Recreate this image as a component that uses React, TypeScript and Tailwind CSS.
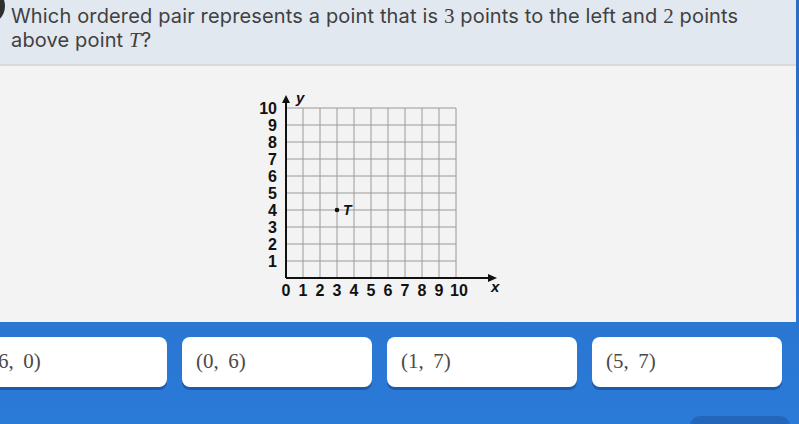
import React from 'react';

const CELL = 17;
const OX = 36;
const OY = 191;

const Graph: React.FC = () => {
  const lines = Array.from({ length: 11 }, (_, i) => i);
  return (
    <svg width="260" height="215" viewBox="0 0 260 215" xmlns="http://www.w3.org/2000/svg">
      {/* grid */}
      {lines.slice(1).map((i) => (
        <line key={'v' + i} x1={OX + i * CELL} y1={OY - 170} x2={OX + i * CELL} y2={OY} stroke="#9a9a9a" strokeWidth="1" />
      ))}
      {lines.slice(1).map((i) => (
        <line key={'h' + i} x1={OX} y1={OY - i * CELL} x2={OX + 170} y2={OY - i * CELL} stroke="#9a9a9a" strokeWidth="1" />
      ))}
      {/* axes */}
      <line x1={OX} y1={OY} x2={OX} y2={14} stroke="#111" strokeWidth="2" />
      <line x1={OX} y1={OY} x2={240} y2={OY} stroke="#111" strokeWidth="2" />
      <polygon points={`${OX - 4},16 ${OX + 4},16 ${OX},8`} fill="#111" />
      <polygon points={`238,${OY - 4} 238,${OY + 4} 247,${OY}`} fill="#111" />
      {/* y labels */}
      {lines.slice(1).map((i) => (
        <text key={'yl' + i} x={27} y={OY - i * CELL + 6} textAnchor="end" fontSize="16" fontWeight="700" fontFamily="'Liberation Sans', Arial, sans-serif" fill="#111">
          {i}
        </text>
      ))}
      {/* x labels */}
      {lines.map((i) => (
        <text key={'xl' + i} x={OX + i * CELL + (i === 10 ? 3 : 0)} y={209} textAnchor="middle" fontSize="16" fontWeight="700" fontFamily="'Liberation Sans', Arial, sans-serif" fill="#111">
          {i}
        </text>
      ))}
      <text x={46} y={16} fontSize="15" fontWeight="700" fontStyle="italic" fontFamily="'Liberation Sans', Arial, sans-serif" fill="#111">y</text>
      <text x={241} y={205} fontSize="15" fontWeight="700" fontStyle="italic" fontFamily="'Liberation Sans', Arial, sans-serif" fill="#111">x</text>
      {/* point T */}
      <circle cx={OX + 3 * CELL} cy={OY - 4 * CELL} r="2.3" fill="#111" />
      <text x={93} y={OY - 4 * CELL + 5} fontSize="14" fontWeight="700" fontStyle="italic" fontFamily="'Liberation Sans', Arial, sans-serif" fill="#111">T</text>
    </svg>
  );
};

const answers = ['(6, 0)', '(0, 6)', '(1, 7)', '(5, 7)'];

export default function App() {
  return (
    <div className="relative w-[799px] h-[424px] overflow-hidden bg-gradient-to-b from-[#2b6dbf] to-[#2a7ad8]">
      <div className="mr-[3px]">
        {/* question header */}
        <div className="h-[66px] bg-[#e2e8f0] border-b-2 border-[#d9dadc] pl-[11px] pt-[4px] pr-[40px]">
          <p className="text-[20px] leading-[24px] tracking-[0.15px] text-[#404040] font-['Inter','Open_Sans',sans-serif]">
            Which ordered pair represents a point that is{' '}
            <span className="font-['Liberation_Serif',serif] text-[21px]">3</span> points to the left and{' '}
            <span className="font-['Liberation_Serif',serif] text-[21px]">2</span> points above point{' '}
            <span className="font-['Liberation_Serif',serif] italic text-[21px]">T</span>?
          </p>
        </div>
        {/* graph area */}
        <div className="h-[256px] bg-[#f3f3f3] pl-[250px] pt-[21px]">
          <Graph />
        </div>
      </div>

      {/* answers */}
      <div className="flex gap-[15px] ml-[-23px] mt-[15px]">
        {answers.map((a) => (
          <div
            key={a}
            className="w-[190px] h-[50px] shrink-0 rounded-[8px] bg-white shadow-[0_3px_0_rgba(20,50,110,0.45)] flex items-center pl-[14px]"
          >
            <span className="text-[21px] text-[#4a4a4a] font-['Liberation_Serif','DejaVu_Serif',serif]">
              {a.replace(', ', ',\u2009 ')}
            </span>
          </div>
        ))}
      </div>

      {/* question number badge */}
      <div className="absolute left-[-33px] top-[-13px] w-[38px] h-[38px] rounded-full bg-[#2f2f2f]" />
      {/* partial button bottom right */}
      <div className="absolute left-[690px] top-[416px] w-[100px] h-[30px] rounded-[10px] bg-[#2466b9]" />
    </div>
  );
}
